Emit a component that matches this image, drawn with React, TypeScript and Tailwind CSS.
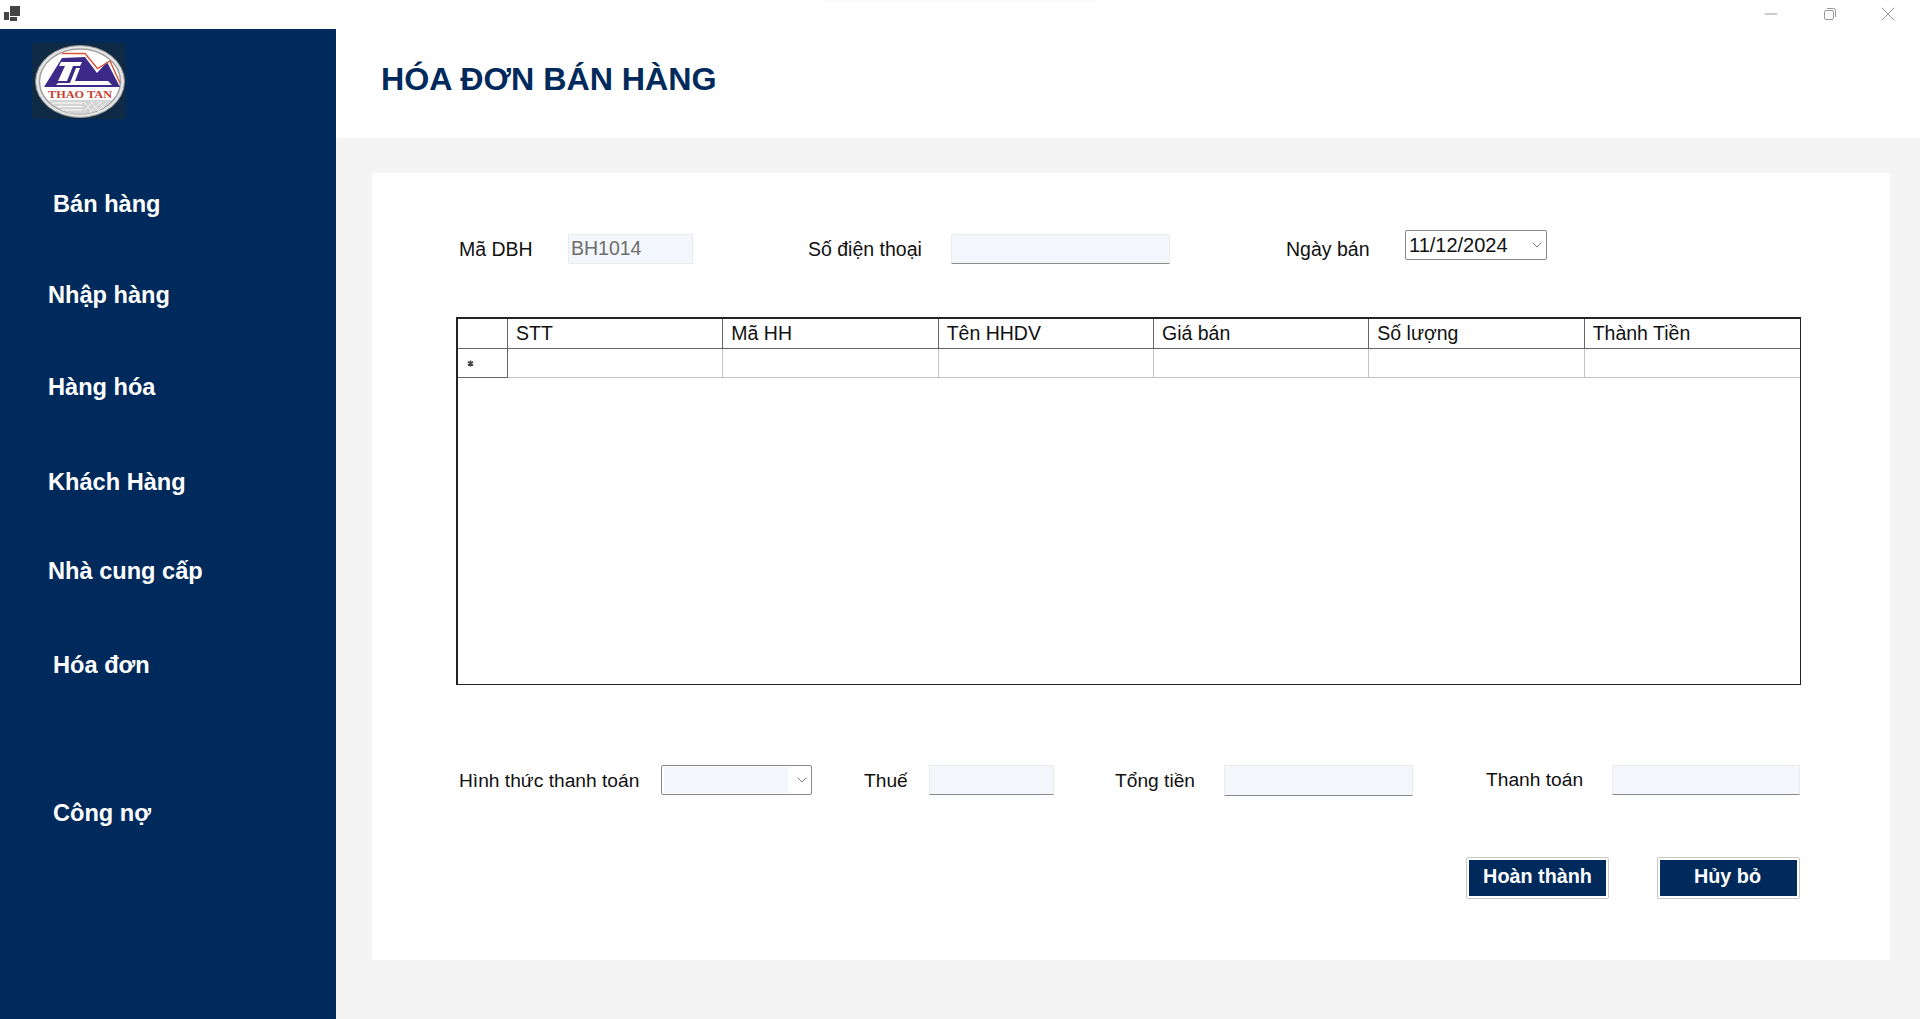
import { ChevronDown, Minus, X } from 'lucide-react';

const menu = [
  { label: 'Bán hàng', cls: 'mt-[0px] ml-[53px]' },
  { label: 'Nhập hàng', cls: 'mt-[63px] ml-[48px]' },
  { label: 'Hàng hóa', cls: 'mt-[64px] ml-[48px]' },
  { label: 'Khách Hàng', cls: 'mt-[67px] ml-[48px]' },
  { label: 'Nhà cung cấp', cls: 'mt-[61px] ml-[48px]' },
  { label: 'Hóa đơn', cls: 'mt-[66px] ml-[53px]' },
  { label: 'Công nợ', cls: 'mt-[120px] ml-[53px]' },
];

const columns = ['STT', 'Mã HH', 'Tên HHDV', 'Giá bán', 'Số lượng', 'Thành Tiền'];

function Logo() {
  return (
    <svg width="94" height="76" viewBox="0 0 94 76" className="block">
      <rect width="94" height="76" fill="#0f2a45" />
      <ellipse cx="48" cy="38.5" rx="44.5" ry="36" fill="#e4e4e4" stroke="#8f8f8f" strokeWidth="1" />
      <ellipse cx="48" cy="38.5" rx="40.5" ry="32.5" fill="#ffffff" stroke="#a0a0a0" strokeWidth="1.5" />
      <path d="M12 44 L30 15 L53 14 L65 30 L75 19 L88 44 Z" fill="#3b2a87" />
      <path d="M30 10.5 L53 10.5 L65.5 25.5 L78 18 L88 40" fill="none" stroke="#d9553a" strokeWidth="1.4" />
      <path d="M29 19 H50 L48 23 H41 L35 38 H26 L33 23 H27 Z" fill="#ffffff" />
      <path d="M44 25 H48 L43 38 H76 L80 42 H24 L26 40 H38 Z" fill="#ffffff" />
      <text x="48" y="55" textAnchor="middle" fontFamily="'Liberation Serif', serif" fontWeight="700" fontSize="10" textLength="64" lengthAdjust="spacingAndGlyphs" fill="#c8402f">THAO TAN</text>
      <path d="M17 57 L80 57 Q68 71 48 71 Q28 71 17 57 Z" fill="#d4d4d4" />
      <path d="M21 60 H50 M25 63.5 H50 M30 67 H50" stroke="#ffffff" strokeWidth="1" />
      <path d="M52 59 L60 69 M58 58 L68 69 M66 58 L72 65 M52 68 L62 58 M58 69 L70 58 M66 68 L75 59" stroke="#f2f2f2" strokeWidth="0.8" />
    </svg>
  );
}

function TextBox({ className, value, flat }: { className: string; value?: string; flat?: boolean }) {
  return (
    <div className={`bg-[#f3f6fb] border border-[#ebebeb] rounded-[1px] pl-[2px] text-[19.5px] leading-[26px] text-[#6d6d6d] ${flat ? '' : 'border-b-[#8a8a8a]'} ${className}`}>
      {value}
    </div>
  );
}

export default function App() {
  return (
    <div className="h-screen w-full flex flex-col bg-white overflow-hidden relative font-['Liberation_Sans',Arial,sans-serif] text-[#111]">
      {/* vet bong mo o tren cung */}
      <div className="absolute top-0 left-[820px] w-[280px] h-[4px] bg-gradient-to-b from-[#fafafa] to-white" />

      {/* thanh tieu de */}
      <div className="h-[29px] flex items-start shrink-0">
        <svg width="16" height="16" viewBox="0 0 16 16" className="mt-[6px] ml-[4px]">
          <rect x="0" y="6" width="5" height="8" fill="#444" />
          <rect x="6" y="0" width="10" height="10" fill="#444" />
          <rect x="6" y="11" width="7" height="4" fill="#444" />
        </svg>
        <div className="ml-auto flex items-center mr-[3px] h-[28px] text-[#999]">
          <div className="w-[58px] flex justify-center">
            <Minus size={20} strokeWidth={1.2} />
          </div>
          <div className="w-[59px] flex justify-center">
            <svg width="14" height="14" viewBox="0 0 14 14" fill="none" stroke="#999">
              <rect x="1.5" y="3.5" width="9" height="9" rx="1.5" />
              <path d="M4 1.5 H10.5 Q12.5 1.5 12.5 3.5 V10" />
            </svg>
          </div>
          <div className="w-[58px] flex justify-center">
            <X size={24} strokeWidth={1} />
          </div>
        </div>
      </div>

      <div className="flex flex-1 min-h-0">
        <aside className="w-[336px] shrink-0 bg-[#002a5c] text-white font-bold text-[23.6px] leading-[28px]">
          <div className="ml-[32px] mt-[14px] mb-[71px]">
            <Logo />
          </div>
          {menu.map((m) => (
            <div key={m.label} className={m.cls}>
              {m.label}
            </div>
          ))}
        </aside>

        <div className="flex-1 flex flex-col min-w-0">
          <header className="h-[109px] shrink-0 pl-[45px] pt-[30px]">
            <h1 className="text-[32.2px] leading-[40px] font-bold text-[#002a5c]">HÓA ĐƠN BÁN HÀNG</h1>
          </header>

          <main className="flex-1 bg-[#f4f4f4] pl-[36px] pr-[30px] pt-[35px] pb-[59px]">
            <div className="h-full bg-white pl-[84px] pr-[90px] pt-[57px] text-[19.5px]">
              <div className="flex items-start h-[87px]">
                <span className="leading-[26px] mt-[6px] w-[109px] ml-[3px]">Mã DBH</span>
                <TextBox className="w-[125px] h-[30px] mt-[4px]" value="BH1014" flat />
                <span className="leading-[26px] mt-[6px] ml-[115px] w-[143px]">Số điện thoại</span>
                <TextBox className="w-[219px] h-[30px] mt-[4px]" />
                <span className="leading-[26px] mt-[6px] ml-[116px] w-[119px]">Ngày bán</span>
                <div className="w-[142px] h-[30px] border border-[#8a8a8a] rounded-[2px] flex items-center justify-between pl-[3px] pr-[1px]">
                  <span className="leading-[24px] text-[20px]">11/12/2024</span>
                  <ChevronDown size={16} strokeWidth={1.1} className="text-[#444]" />
                </div>
              </div>

              <div className="w-[1345px] h-[368px] border-2 border-[#222] border-b-[1.5px] border-r-[1.5px]">
                <div className="grid grid-cols-[50px_repeat(6,1fr)] h-[30px] border-b border-[#666]">
                  <div className="border-r border-[#666]" />
                  {columns.map((c, i) => (
                    <div key={c} className={`pl-[8px] leading-[29px] ${i < 5 ? 'border-r border-[#666]' : ''}`}>
                      {c}
                    </div>
                  ))}
                </div>
                <div className="grid grid-cols-[50px_repeat(6,1fr)] h-[29px] border-b border-[#c4c4c4]">
                  <div className="border-r border-b border-[#666] -mb-px flex items-center pl-[9px]">
                    <svg width="7" height="7" viewBox="0 0 8 8" stroke="#444" strokeWidth="1.8">
                      <path d="M4 0.5 V7.5 M1 2 L7 6 M7 2 L1 6" />
                    </svg>
                  </div>
                  {columns.map((c, i) => (
                    <div key={c} className={i < 5 ? 'border-r border-[#c4c4c4]' : ''} />
                  ))}
                </div>
              </div>

              <div className="flex items-start mt-[80px] text-[19.2px]">
                <span className="leading-[26px] mt-[3px] ml-[3px] w-[202px]">Hình thức thanh toán</span>
                <div className="w-[151px] h-[30px] border border-[#8a8a8a] rounded-[2px] flex items-center pl-[2px] pr-[1px]">
                  <div className="w-[124px] h-[26px] bg-[#f3f6fb]" />
                  <ChevronDown size={16} strokeWidth={1.1} className="ml-auto text-[#444]" />
                </div>
                <span className="leading-[26px] mt-[3px] ml-[52px] w-[65px]">Thuế</span>
                <TextBox className="w-[125px] h-[30px]" />
                <span className="leading-[26px] mt-[3px] ml-[61px] w-[109px]">Tổng tiền</span>
                <TextBox className="w-[189px] h-[31px]" />
                <span className="leading-[26px] mt-[2px] ml-[73px] w-[126px]">Thanh toán</span>
                <TextBox className="w-[188px] h-[30px]" />
              </div>

              <div className="flex justify-end gap-[48px] mt-[61px]">
                <button className="w-[143px] h-[42px] pb-[2px] bg-[#002a5c] text-white text-[19.8px] font-bold leading-none border-[3px] border-white outline outline-1 -outline-offset-1 outline-[#c8c8c8] rounded-[2px]">
                  Hoàn thành
                </button>
                <button className="w-[143px] h-[42px] pb-[2px] pr-[2px] bg-[#002a5c] text-white text-[19.8px] font-bold leading-none border-[3px] border-white outline outline-1 -outline-offset-1 outline-[#c8c8c8] rounded-[2px]">
                  Hủy bỏ
                </button>
              </div>
            </div>
          </main>
        </div>
      </div>
    </div>
  );
}
